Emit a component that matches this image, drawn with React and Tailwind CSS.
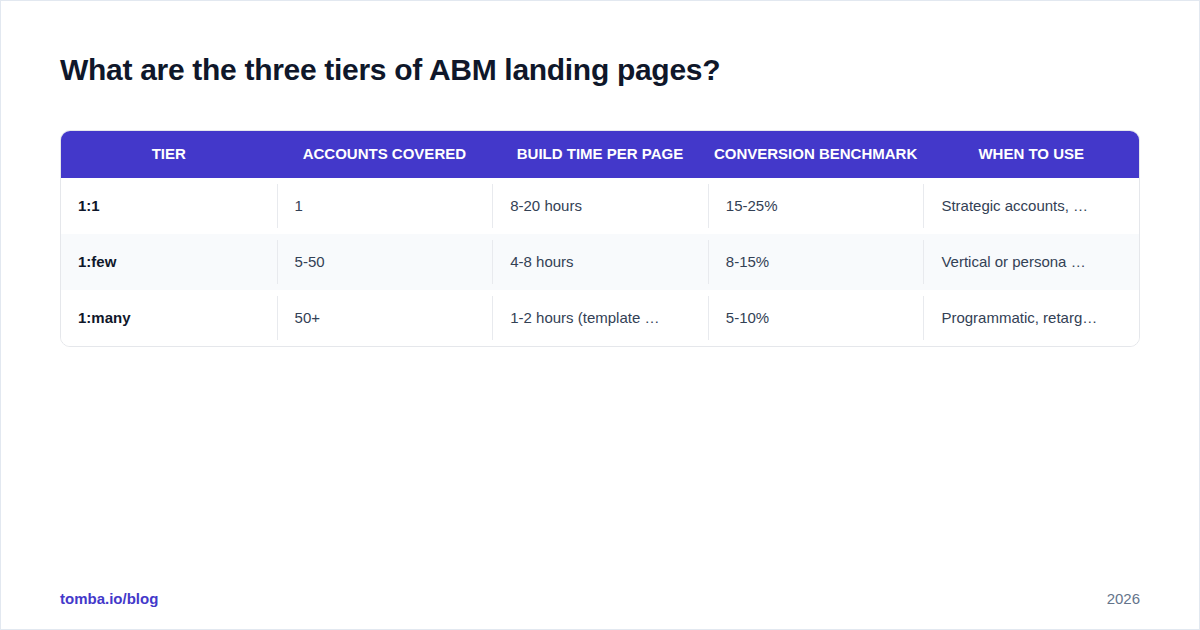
import React from "react";

const rows = [
  ["1:1", "1", "8-20 hours", "15-25%", "Strategic accounts, …"],
  ["1:few", "5-50", "4-8 hours", "8-15%", "Vertical or persona …"],
  ["1:many", "50+", "1-2 hours (template …", "5-10%", "Programmatic, retarg…"],
];

const headers = [
  "Tier",
  "Accounts covered",
  "Build time per page",
  "Conversion benchmark",
  "When to use",
];

export default function App() {
  return (
    <div
      className="w-[1200px] h-[630px] bg-white border border-[#e2e8f0] flex flex-col px-[59px] pt-[51px] pb-[21px]"
      style={{ fontFamily: '"Liberation Sans", Arial, sans-serif' }}
    >
      <h1 className="text-[30px] leading-[36px] font-bold text-[#0f172a] tracking-[-0.3px]">
        What are the three tiers of ABM landing pages?
      </h1>

      {/* Table */}
      <div className="mt-[42px] border border-[#e5e7eb] rounded-[10px] overflow-hidden">
        <div className="grid grid-cols-5 bg-[#4338ca] h-[47px]">
          {headers.map((h) => (
            <div
              key={h}
              className="flex items-center justify-center text-white font-bold text-[15px] uppercase"
            >
              {h}
            </div>
          ))}
        </div>

        {rows.map((row, i) => (
          <div
            key={row[0]}
            className={`grid grid-cols-5 h-[56px] ${i === 1 ? "bg-[#f8fafc]" : "bg-white"}`}
          >
            {row.map((cell, j) => (
              <div
                key={j}
                className={
                  j === 0
                    ? "flex items-center pl-[17px] text-[15px] font-bold text-[#0f172a]"
                    : "flex items-center my-[6px] border-l border-[#e8eaee] pl-[17px] text-[15px] text-[#334155] whitespace-nowrap"
                }
              >
                {cell}
              </div>
            ))}
          </div>
        ))}
      </div>

      {/* Footer */}
      <div className="mt-auto flex items-center justify-between text-[15px] leading-[18px]">
        <span className="font-bold text-[#4338ca]">tomba.io/blog</span>
        <span className="text-[#64748b]">2026</span>
      </div>
    </div>
  );
}
